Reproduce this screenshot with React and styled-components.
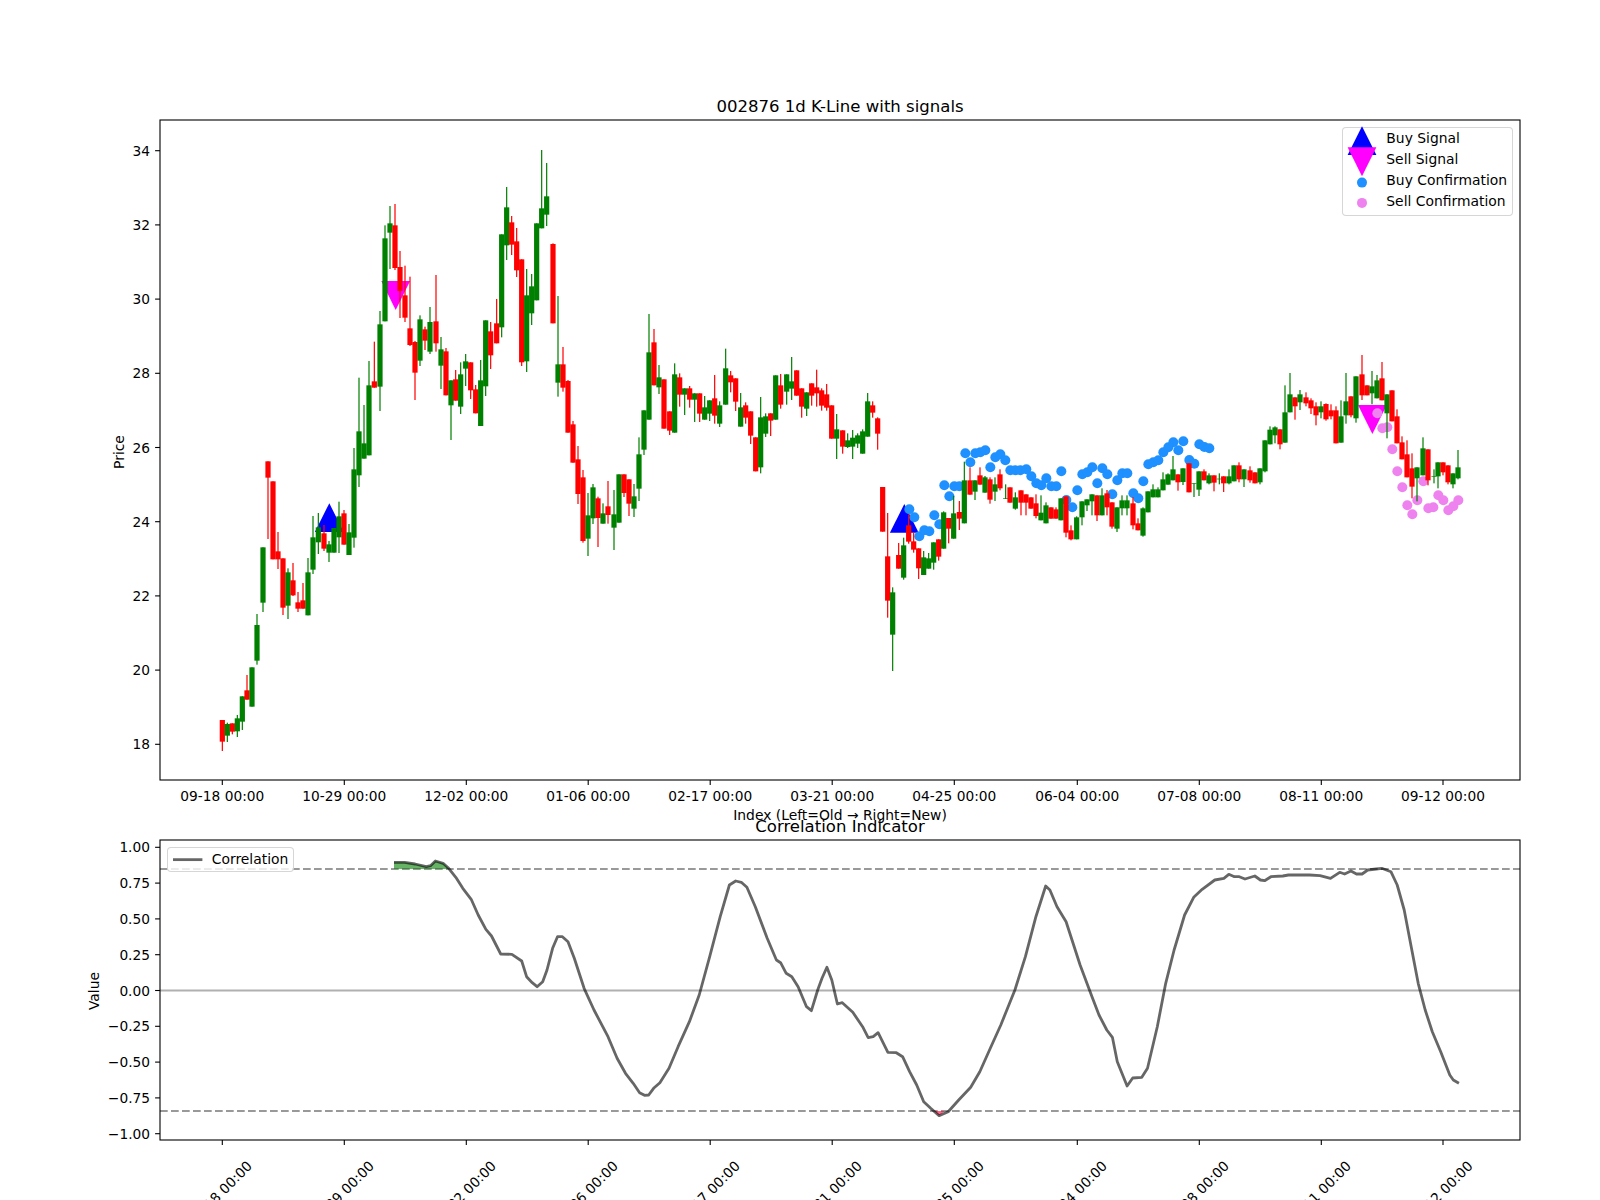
import React from "react";
import styled, { createGlobalStyle } from "styled-components";

const Global = createGlobalStyle`
  html, body { margin: 0; padding: 0; background: #fff; }
  body { font-family: "DejaVu Sans", "Liberation Sans", sans-serif; }
`;

const r = "#ff0000";
const g = "#008000";

/* Candles are read off the reference at 3x: [x, colour, bodyTop, bodyBottom, wickTop, wickBottom]. */
const seg = (ox, oy, rows) =>
  rows.map(([x, c, bt, bb, wt, wb]) => ({
    x: ox + x / 3,
    c,
    bt: oy + bt / 3,
    bb: oy + bb / 3,
    wt: oy + wt / 3,
    wb: oy + wb / 3,
  }));

const candles = [
  ...seg(150, 620, [
    [217, r, 300, 365, 300, 393], [232, g, 312, 347, 308, 366], [247, r, 310, 335, 310, 343],
    [262, g, 295, 334, 285, 351], [277, g, 229, 305, 229, 330], [291, r, 211, 239, 165, 239],
    [306, g, 142, 260, 142, 260], [321, g, 15, 122, -18, 134],
  ]),
  ...seg(150, 420, [
    [339, g, 382, 548, 382, 576], [354, r, 124, 173, 124, 357], [369, r, 184, 418, 184, 418],
    [384, r, 394, 418, 336, 447], [399, r, 415, 563, 415, 585], [414, g, 457, 557, 445, 597],
    [429, r, 481, 526, 429, 528], [444, r, 547, 566, 516, 576], [459, r, 541, 566, 489, 566],
    [474, g, 457, 586, 414, 586], [489, g, 352, 449, 288, 462], [505, g, 322, 367, 279, 402],
    [522, r, 340, 386, 315, 393], [537, g, 373, 398, 363, 426], [552, g, 324, 398, 324, 398],
    [567, g, 289, 352, 245, 399], [582, r, 280, 374, 270, 374], [597, g, 337, 405, 312, 405],
    [612, g, 148, 353, 84, 383], [627, g, 34, 166, -127, 201], [642, g, 70, 116, -45, 116],
    [657, g, -104, 106, -177, 106],
  ]),
  ...seg(150, 120, [
    [673, r, 784, 803, 665, 803], [690, g, 613, 800, 573, 873], [705, g, 355, 604, 316, 604],
    [720, g, 310, 338, 258, 447], [735, r, 316, 444, 252, 450], [750, r, 441, 513, 393, 594],
    [765, r, 526, 593, 437, 606], [780, r, 625, 675, 470, 678], [795, r, 666, 758, 663, 840],
    [810, g, 598, 722, 586, 738], [825, r, 628, 662, 620, 690], [840, g, 606, 695, 561, 702],
    [858, r, 604, 670, 465, 695], [873, g, 688, 737, 651, 807], [888, r, 694, 826, 684, 826],
    [903, g, 781, 856, 781, 960], [917, r, 778, 842, 750, 842], [932, g, 763, 860, 727, 882],
    [947, g, 724, 746, 702, 798], [962, r, 727, 811, 727, 837], [977, r, 808, 880, 795, 880],
    [992, g, 781, 918, 720, 918], [1007, g, 601, 799, 601, 828], [1022, r, 634, 706, 606, 747],
    [1040, r, 610, 670, 537, 670], [1055, g, 343, 622, 343, 652], [1070, g, 262, 376, 201, 420],
    [1085, r, 307, 374, 288, 405], [1100, r, 364, 451, 324, 471], [1115, r, 418, 727, 418, 738],
    [1130, g, 526, 724, 447, 756], [1145, g, 499, 580, 462, 615], [1160, g, 310, 541, 310, 541],
    [1175, g, 265, 325, 90, 325], [1190, g, 229, 284, 129, 318],
  ]),
  ...seg(520, 120, [
    [99, r, 372, 610, 370, 610], [114, g, 733, 788, 528, 830], [129, r, 733, 803, 681, 815],
  ]),
  ...seg(520, 360, [
    [144, r, 63, 218, 60, 218], [159, r, 193, 308, 183, 308], [174, r, 298, 402, 258, 432],
    [189, r, 352, 543, 330, 548], [204, g, 466, 536, 399, 588], [219, g, 382, 475, 372, 492],
    [234, r, 415, 474, 410, 561], [249, g, 460, 491, 430, 491], [264, r, 439, 465, 363, 491],
    [282, g, 463, 503, 390, 570], [297, g, 343, 488, 343, 488], [312, r, 343, 399, 343, 411],
    [327, r, 358, 431, 358, 468], [342, g, 409, 446, 372, 471], [357, g, 283, 386, 232, 423],
    [372, g, 151, 269, 151, 285], [387, g, -23, 179, -138, 179], [402, r, -53, 76, -93, 76],
    [417, g, 52, 82, 15, 102], [432, r, 58, 206, 58, 206], [449, r, 154, 212, 154, 225],
    [464, g, 43, 218, 10, 218], [479, r, 52, 104, 40, 140], [494, g, 85, 104, 85, 165],
    [509, r, 85, 119, 78, 143], [524, g, 100, 119, 100, 186], [539, r, 100, 161, 100, 186],
    [554, g, 142, 179, 108, 179], [569, g, 121, 161, 121, 183], [584, r, 115, 167, 45, 191],
    [599, g, 136, 191, 124, 201], [617, g, 25, 134, -34, 134], [632, r, 46, 67, 33, 97],
    [647, r, 55, 125, 55, 153], [662, g, 142, 200, 99, 200], [677, r, 136, 173, 127, 191],
    [692, r, 154, 227, 154, 252], [707, r, 232, 334, 232, 334], [722, g, 172, 322, 111, 340],
    [737, g, 169, 221, 160, 231], [752, r, 160, 182, 160, 228], [767, g, 46, 179, 46, 179],
    [782, r, 76, 134, 42, 146], [800, g, 43, 95, 43, 134], [815, g, 64, 86, -9, 120],
    [830, r, 31, 107, 31, 107], [845, r, 85, 140, 85, 173], [860, g, 97, 146, 97, 168],
    [875, r, 70, 107, 70, 137], [890, r, 82, 100, 29, 140], [905, r, 91, 137, 85, 152],
    [920, r, 103, 143, 72, 152], [935, r, 136, 236, 136, 236], [950, g, 208, 236, 162, 297],
    [968, r, 211, 260, 211, 281], [983, g, 241, 261, 220, 264], [998, g, 233, 260, 210, 297],
    [1013, g, 226, 251, 220, 264], [1028, g, 214, 281, 208, 281], [1043, g, 124, 230, 99, 230],
    [1058, r, 136, 158, 124, 173], [1073, r, 175, 221, 172, 269], [1088, r, 381, 515, 381, 515],
    [1103, r, 589, 722, 459, 773], [1118, g, 697, 824, 682, 933],
  ]),
  ...seg(860, 420, [
    [116, r, 405, 446, 369, 446], [131, g, 376, 473, 353, 479], [146, r, 316, 365, 283, 371],
    [161, r, 364, 389, 337, 398], [176, r, 385, 445, 385, 477], [191, g, 412, 465, 393, 465],
    [206, g, 415, 446, 399, 446], [221, g, 367, 428, 367, 449], [236, r, 358, 410, 358, 422],
    [251, g, 277, 386, 274, 386], [266, r, 294, 326, 294, 370], [281, g, 280, 356, 227, 356],
    [298, r, 276, 296, 243, 330], [313, g, 181, 310, 125, 310], [330, r, 181, 224, 142, 224],
    [345, g, 181, 215, 181, 240], [360, r, 166, 194, 142, 194], [375, g, 172, 218, 168, 218],
    [390, r, 178, 239, 172, 251], [405, g, 193, 215, 172, 243], [420, r, 163, 205, 148, 211],
    [437, g, 235, 237, 193, 237], [450, r, 202, 248, 202, 248], [466, g, 232, 266, 217, 269],
    [483, r, 211, 248, 211, 286], [498, r, 223, 248, 223, 286], [513, r, 232, 266, 232, 266],
    [528, r, 250, 288, 223, 295], [543, g, 278, 301, 226, 301], [558, g, 256, 310, 247, 310],
    [573, r, 262, 296, 262, 296], [588, r, 268, 296, 262, 296], [603, g, 235, 301, 235, 301],
    [618, r, 229, 338, 229, 352], [633, r, 331, 358, 316, 361], [650, g, 292, 358, 289, 358],
    [666, g, 244, 292, 244, 316], [681, g, 238, 256, 238, 273], [696, g, 223, 244, 223, 286],
    [711, r, 226, 286, 226, 303], [726, g, 226, 286, 205, 286], [741, r, 220, 262, 210, 286],
    [756, r, 247, 320, 247, 326], [771, g, 262, 326, 262, 336], [786, g, 241, 265, 226, 286],
    [801, g, 241, 265, 226, 286], [819, r, 250, 316, 232, 328], [834, r, 310, 331, 295, 331],
    [849, g, 265, 347, 262, 350], [864, g, 214, 277, 214, 277], [879, g, 208, 232, 193, 232],
    [894, g, 208, 232, 202, 232], [909, g, 178, 211, 157, 211], [924, g, 163, 194, 160, 194],
    [939, g, 148, 181, 108, 181], [954, r, 163, 187, 163, 212],
  ]),
  ...seg(1160, 360, [
    [69, g, 325, 366, 325, 375], [87, r, 310, 397, 310, 397], [102, g, 370, 372, 370, 411],
    [117, g, 334, 389, 334, 408], [132, r, 334, 361, 328, 361], [147, g, 346, 370, 340, 373],
    [162, r, 346, 368, 346, 394], [178, g, 356, 358, 340, 373], [191, r, 349, 370, 349, 396],
    [207, g, 349, 370, 328, 373], [222, g, 316, 364, 316, 364], [237, r, 316, 358, 307, 367],
    [252, g, 328, 358, 328, 381], [270, r, 331, 361, 319, 368], [285, r, 337, 370, 337, 370],
    [300, g, 325, 367, 325, 373], [315, g, 241, 334, 241, 337], [330, g, 209, 253, 199, 253],
    [345, g, 202, 226, 199, 250], [360, r, 208, 253, 208, 268], [375, g, 157, 248, 76, 248],
    [390, g, 103, 157, 39, 157], [405, r, 112, 139, 112, 179], [420, g, 103, 127, 90, 150],
    [438, r, 112, 130, 97, 139], [453, r, 121, 145, 115, 162], [468, r, 139, 166, 127, 196],
    [483, g, 139, 157, 124, 175], [498, r, 132, 178, 130, 182], [513, r, 151, 169, 133, 178],
    [528, r, 151, 250, 139, 250], [543, g, 169, 248, 121, 248], [558, g, 124, 166, 39, 191],
    [573, r, 109, 166, 109, 172], [588, g, 49, 175, 49, 188], [606, r, 43, 106, -15, 120],
    [621, r, 76, 106, 76, 106], [636, g, 79, 100, 33, 133], [651, g, 61, 115, 45, 115],
    [666, r, 55, 121, 6, 121], [681, g, 103, 160, 103, 235], [696, r, 91, 184, 91, 184],
    [711, r, 169, 250, 148, 250], [726, r, 247, 298, 229, 298], [741, r, 283, 352, 241, 352],
    [756, r, 325, 380, 280, 415], [771, g, 322, 355, 322, 424], [789, g, 265, 346, 232, 346],
    [804, r, 268, 361, 268, 376], [822, g, 349, 351, 328, 370], [834, g, 307, 349, 307, 385],
    [849, r, 307, 337, 307, 346], [864, r, 316, 367, 316, 373], [879, g, 340, 373, 340, 385],
    [894, g, 322, 355, 270, 358],
  ]),
];

const toDots = (ox, oy, rows) => rows.map(([x, y]) => [ox + x / 3, oy + y / 3]);

const buyDots = [
  ...toDots(860, 420, [
    [148, 268], [163, 292], [178, 349], [193, 331], [208, 334], [223, 286], [238, 313], [253, 196],
    [268, 229], [283, 199], [298, 199], [316, 100], [331, 127], [346, 100], [361, 97], [376, 91],
    [391, 142], [406, 112], [421, 103], [436, 121], [451, 151], [466, 151], [481, 151], [499, 148],
    [514, 169], [529, 190], [544, 196], [559, 175], [574, 199], [589, 199], [604, 154], [619, 240],
    [637, 262], [652, 211], [667, 163], [682, 157], [697, 142], [727, 145], [742, 163], [712, 190],
    [757, 223], [772, 181], [787, 160], [802, 160], [820, 220], [835, 235], [850, 184], [865, 133],
    [880, 127], [895, 121], [910, 97], [925, 82], [940, 67], [955, 91],
  ]),
  ...toDots(1160, 360, [[70, 244], [88, 300], [103, 311], [118, 253], [133, 261], [148, 265]]),
];

const sellDots = toDots(1160, 360, [
  [652, 160], [667, 205], [682, 202], [697, 268], [712, 334], [727, 382], [742, 436], [757, 463],
  [772, 421], [790, 364], [805, 445], [820, 442], [835, 406], [850, 421], [865, 451], [880, 439],
  [895, 421],
]);

const corrRaw = [
  [20, 37], [35, 37], [50, 42], [66, 50], [72, 47], [79, 33], [90, 40], [98, 55], [108, 82], [118, 115],
  [130, 148], [140, 195], [151, 238], [159, 258], [172, 312], [188, 313], [202, 333], [209, 380], [217, 398],
  [224, 410], [232, 395], [238, 360], [246, 295], [253, 260], [260, 260], [268, 275], [277, 325], [291, 415],
  [305, 480], [325, 560], [338, 625], [350, 670], [361, 700], [370, 728], [377, 736], [383, 735], [390, 715],
  [399, 698], [412, 655], [425, 590], [441, 515], [455, 435], [470, 320], [485, 200], [498, 105], [507, 93],
  [515, 97], [523, 112], [535, 170], [552, 265], [565, 330], [571, 338], [579, 370], [587, 380], [596, 410],
  [608, 470], [615, 482], [624, 420], [630, 385], [637, 352], [644, 390], [652, 462], [659, 458], [674, 487],
  [688, 530], [696, 563], [703, 560], [710, 548], [724, 607], [736, 608], [745, 620], [755, 665], [765, 705],
  [775, 755], [785, 775], [797, 797], [810, 785], [825, 750], [842, 712], [855, 665], [870, 595], [885, 525],
  [905, 420], [920, 320], [935, 200], [949, 108], [955, 120], [965, 170], [978, 215], [998, 345], [1015, 440],
  [1025, 495], [1036, 540], [1044, 562], [1051, 635], [1065, 708], [1073, 684], [1086, 682], [1094, 655],
  [1108, 530], [1120, 400], [1132, 300], [1147, 195], [1160, 142], [1172, 118], [1190, 90], [1203, 85],
  [1210, 73], [1218, 80], [1225, 80], [1233, 87], [1247, 78], [1255, 90], [1261, 92], [1270, 80], [1287, 78],
  [1295, 75], [1310, 75], [1325, 75], [1340, 77], [1355, 85], [1368, 67], [1375, 72], [1384, 63], [1392, 72],
  [1400, 72], [1408, 60], [1420, 57], [1428, 55], [1441, 65], [1450, 105], [1460, 180], [1470, 290],
  [1480, 400], [1490, 480], [1500, 545], [1512, 605], [1525, 675], [1530, 690], [1538, 700],
];
const corrPts = corrRaw.map(([x, y]) => [380 + x / 1.4255, 850 + y / 3]);
const corrLine = corrPts.map(([x, y]) => `${x.toFixed(1)},${y.toFixed(1)}`).join(" ");
const upperFill = corrPts.slice(0, 8).map(([x, y]) => `${x.toFixed(1)},${y.toFixed(1)}`).join(" ");

const tickX = [222.3, 344.3, 466.3, 588.2, 710.2, 832.2, 954.3, 1077.3, 1199.3, 1321.3, 1443];
const topDates = ["09-18 00:00", "10-29 00:00", "12-02 00:00", "01-06 00:00", "02-17 00:00", "03-21 00:00",
  "04-25 00:00", "06-04 00:00", "07-08 00:00", "08-11 00:00", "09-12 00:00"];
const priceTicks = [34, 32, 30, 28, 26, 24, 22, 20, 18].map((v) => ({ v, y: 744.3 - (v - 18) * 37.1 }));
const corrTicks = ["1.00", "0.75", "0.50", "0.25", "0.00", "−0.25", "−0.50", "−0.75", "−1.00"].map((label, i) => ({
  label,
  y: 847.3 + i * 35.8,
}));

const Figure = styled.main`
  width: 1600px;
  height: 1200px;
  box-sizing: border-box;
  padding: 120px 80px 0 160px;
  overflow: hidden;
  display: flex;
  flex-direction: column;
  gap: 60px;
  background: #fff;
`;
const Axes = styled.section`
  position: relative;
  width: 1360px;
  height: ${(p) => p.$height}px;
  flex: none;
`;
const Plot = styled.svg`
  display: block;
  width: 100%;
  height: 100%;
  overflow: visible;
  font-family: "DejaVu Sans", "Liberation Sans", sans-serif;
`;
const Spine = styled.rect`
  fill: none;
  stroke: #000;
  stroke-width: 1.1;
`;
const Tick = styled.line`
  stroke: #000;
  stroke-width: 1.1;
`;
const TickLabel = styled.text`
  font-size: 13.75px;
  fill: #000;
  text-anchor: ${(p) => p.$anchor || "middle"};
  dominant-baseline: ${(p) => p.$baseline || "auto"};
`;
const AxisLabel = styled.text`
  font-size: 13.89px;
  fill: #000;
  text-anchor: middle;
`;
const Title = styled.text`
  font-size: 16.55px;
  fill: #000;
  text-anchor: middle;
`;
const Wick = styled.rect`
  fill: ${(p) => p.$color};
`;
const Body = styled.rect`
  fill: ${(p) => p.$color};
`;
const Signal = styled.polygon`
  fill: ${(p) => p.$color};
`;
const Dot = styled.circle`
  fill: ${(p) => p.$color};
`;
const RefLine = styled.line`
  stroke: ${(p) => p.$color};
  stroke-width: 2.2;
  stroke-dasharray: ${(p) => (p.$dashed ? "7.7 3.3" : "none")};
`;
const CorrLine = styled.polyline`
  fill: none;
  stroke: #000;
  stroke-opacity: 0.6;
  stroke-width: 2.8;
  stroke-linejoin: round;
`;
const Band = styled.polygon`
  fill: ${(p) => p.$color};
  fill-opacity: 0.6;
`;

const Legend = styled.aside`
  position: absolute;
  top: 7.3px;
  ${(p) => (p.$left ? "left: 7.3px;" : "right: 6.7px;")}
  width: ${(p) => p.$width}px;
  height: ${(p) => p.$height}px;
  box-sizing: border-box;
  padding-bottom: ${(p) => p.$pad}px;
  display: flex;
  flex-direction: column;
  justify-content: center;
  background: rgba(255, 255, 255, 0.8);
  border: 1.1px solid rgba(204, 204, 204, 0.8);
  border-radius: 4px;
  font-size: 13.89px;
  color: #000;
`;
const LegendRow = styled.div`
  display: grid;
  grid-template-columns: ${(p) => p.$handle}px 1fr;
  height: 20.8px;
  align-items: center;
  white-space: nowrap;
  position: relative;
`;
const Handle = styled.svg`
  display: block;
  width: 100%;
  height: 20.8px;
  overflow: visible;
`;
const HandleLine = styled.line`
  stroke: #000;
  stroke-opacity: 0.6;
  stroke-width: 2.8;
`;

const BUY = "#0000ff";
const SELL = "#ff00ff";
const DODGER = "#1e90ff";
const VIOLET = "#ee82ee";

const upTri = (cx, top, half = 14.4, h = 28.8) => `${cx},${top} ${cx - half},${top + h} ${cx + half},${top + h}`;
const downTri = (cx, top, half = 14.4, h = 29) => `${cx - half},${top} ${cx + half},${top} ${cx},${top + h}`;

const PriceLegend = () => (
  <Legend $width={171} $height={88.4} $pad={3.8}>
    <LegendRow $handle={43}>
      <Handle viewBox="0 -10.4 43 20.8"><Signal $color={BUY} points={upTri(19, -12.1)} /></Handle>
      <span>Buy Signal</span>
    </LegendRow>
    <LegendRow $handle={43}>
      <Handle viewBox="0 -10.4 43 20.8"><Signal $color={SELL} points={downTri(19, -12.1)} /></Handle>
      <span>Sell Signal</span>
    </LegendRow>
    <LegendRow $handle={43}>
      <Handle viewBox="0 -10.4 43 20.8"><Dot $color={DODGER} cx={19} cy={2.2} r={5} /></Handle>
      <span>Buy Confirmation</span>
    </LegendRow>
    <LegendRow $handle={43}>
      <Handle viewBox="0 -10.4 43 20.8"><Dot $color={VIOLET} cx={19} cy={2.5} r={5} /></Handle>
      <span>Sell Confirmation</span>
    </LegendRow>
  </Legend>
);

const CorrLegend = () => (
  <Legend $left $width={126.7} $height={25} $pad={1.5}>
    <LegendRow $handle={43.5}>
      <Handle viewBox="0 -10.4 43.5 20.8"><HandleLine x1={5} x2={34.4} y1={0.25} y2={0.25} /></Handle>
      <span>Correlation</span>
    </LegendRow>
  </Legend>
);

export default function App() {
  return (
    <>
      <Global />
      <Figure>
        <Axes $height={660}>
          <Plot viewBox="160 120 1360 660">
            <Title x={840} y={112}>002876 1d K-Line with signals</Title>
            <Signal $color={BUY} points={upTri(329.3, 503.2)} />
            <Signal $color={BUY} points={upTri(904.3, 504)} />
            <Signal $color={SELL} points={downTri(395.7, 281)} />
            <Signal $color={SELL} points={downTri(1372.4, 405)} />
            {buyDots.map(([cx, cy], i) => <Dot key={i} $color={DODGER} cx={cx} cy={cy} r={5} />)}
            {sellDots.map(([cx, cy], i) => <Dot key={i} $color={VIOLET} cx={cx} cy={cy} r={5} />)}
            {candles.map((k, i) => (
              <g key={i}>
                <Wick $color={k.c} x={k.x - 0.6} width={1.2} y={k.wt} height={k.wb - k.wt} />
                <Body $color={k.c} x={k.x - 2.6} width={5.2} y={k.bt} height={k.bb - k.bt} />
              </g>
            ))}
            <Spine x={160} y={120} width={1360} height={660} />
            {priceTicks.map(({ v, y }) => (
              <g key={v}>
                <Tick x1={155.1} x2={160} y1={y} y2={y} />
                <TickLabel $anchor="end" $baseline="central" x={150} y={y}>{v}</TickLabel>
              </g>
            ))}
            {tickX.map((x, i) => (
              <g key={x}>
                <Tick x1={x} x2={x} y1={780} y2={784.9} />
                <TickLabel x={x} y={800.7}>{topDates[i]}</TickLabel>
              </g>
            ))}
            <AxisLabel transform="rotate(-90 124 452)" x={124} y={452}>Price</AxisLabel>
            <AxisLabel x={840} y={820}>Index (Left=Old → Right=New)</AxisLabel>
          </Plot>
          <PriceLegend />
        </Axes>
        <Axes $height={300}>
          <Plot viewBox="160 840 1360 300">
            <Title x={840} y={832}>Correlation Indicator</Title>
            <RefLine $color="#b0b0b0" x1={160} x2={1520} y1={990.5} y2={990.5} />
            <RefLine $dashed $color="#999999" x1={160} x2={1520} y1={869} y2={869} />
            <RefLine $dashed $color="#999999" x1={160} x2={1520} y1={1111} y2={1111} />
            <Band $color="#008000" points={`${upperFill} 449,869 394,869`} />
            <Band $color="#ff0033" points="934,1111 945,1111 939,1115.5" />
            <CorrLine points={corrLine} />
            <Spine x={160} y={840} width={1360} height={300} />
            {corrTicks.map(({ label, y }) => (
              <g key={label}>
                <Tick x1={155.1} x2={160} y1={y} y2={y} />
                <TickLabel $anchor="end" $baseline="central" x={150} y={y}>{label}</TickLabel>
              </g>
            ))}
            {tickX.map((x, i) => (
              <g key={x}>
                <Tick x1={x} x2={x} y1={1140} y2={1144.9} />
                <TickLabel $baseline="central" transform={`rotate(-45 ${x - 2.5} 1193)`} x={x - 2.5} y={1193}>{topDates[i]}</TickLabel>
              </g>
            ))}
            <AxisLabel transform="rotate(-90 99 991)" x={99} y={991}>Value</AxisLabel>
          </Plot>
          <CorrLegend />
        </Axes>
      </Figure>
    </>
  );
}
